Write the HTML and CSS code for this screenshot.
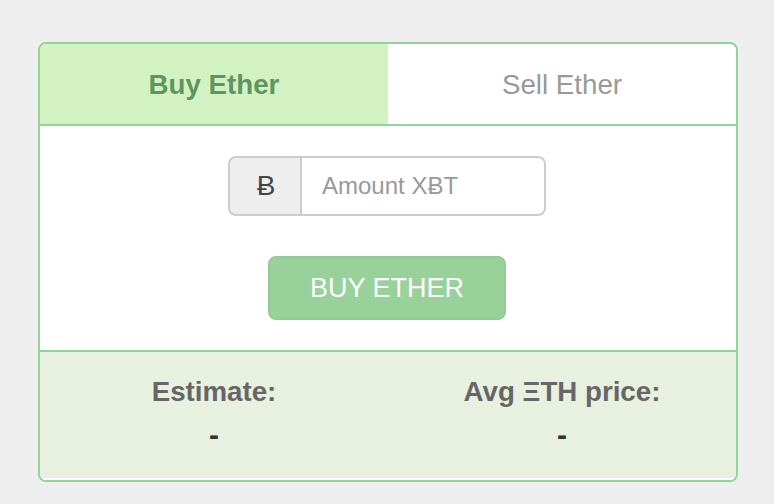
FILE: index.html
```html
<!DOCTYPE html>
<html lang="en">
<head>
    <meta charset="UTF-8">
    <meta name="viewport" content="width=device-width, initial-scale=1.0">
    <title>Buy Ether</title>
    <link rel="stylesheet" href="styles.css">
</head>
<body>
    <div class="panel">
        <div class="tabs">
            <div class="tab active">Buy Ether</div>
            <div class="tab">Sell Ether</div>
        </div>
        <div class="order">
            <div class="input-group">
                <span class="addon">Ƀ</span>
                <input class="amount" type="text" placeholder="Amount XɃT">
            </div>
            <button class="buy">BUY ETHER</button>
        </div>
        <div class="stats">
            <div class="stat">
                <div class="label">Estimate:</div>
                <div class="value">-</div>
            </div>
            <div class="stat">
                <div class="label">Avg ΞTH price:</div>
                <div class="value">-</div>
            </div>
        </div>
    </div>
</body>
</html>
```

FILE: styles.css
```css
* {
    box-sizing: border-box;
}

body {
    margin: 0;
    height: 504px;
    overflow: hidden;
    background: #eee;
    font-family: "Liberation Sans", Arial, sans-serif;
    padding: 42px 36px 0 38px;
}

.panel {
    width: 700px;
    height: 440px;
    background: #fff;
    border: 2px solid #92d396;
    border-radius: 8px;
    overflow: hidden;
}

.tabs {
    display: flex;
    height: 82px;
    border-bottom: 2px solid #92d396;
}

.tab {
    width: 50%;
    padding-top: 1px;
    display: flex;
    align-items: center;
    justify-content: center;
    font-size: 27.7px;
    color: #999;
}

.tab.active {
    background: #d3f2c1;
    color: #5f9463;
    font-weight: bold;
}

.order {
    height: 224px;
    padding: 30px 2px 0 0;
    display: flex;
    flex-direction: column;
    align-items: center;
}

.input-group {
    display: flex;
    width: 318px;
    height: 60px;
}

.addon {
    width: 74px;
    padding-left: 2px;
    display: flex;
    align-items: center;
    justify-content: center;
    background: #eee;
    border: 2px solid #ccc;
    border-radius: 8px 0 0 8px;
    color: #444;
    font-size: 28px;
}

.amount {
    flex: 1;
    min-width: 0;
    border: 2px solid #ccc;
    border-left: none;
    border-radius: 0 8px 8px 0;
    padding: 0 20px;
    font: inherit;
    font-size: 24px;
    color: #555;
}

.amount::placeholder {
    color: #999;
    opacity: 1;
}

.buy {
    width: 238px;
    height: 64px;
    margin-top: 40px;
    background: #98d19a;
    border: 2px solid #92cd94;
    border-radius: 8px;
    color: #fff;
    font: inherit;
    font-size: 27px;
}

.stats {
    display: flex;
    height: 130px;
    padding-top: 25px;
    background: #e8f0e0;
    border-top: 2px solid #92d396;
    border-bottom: 2px solid #fff;
}

.stat {
    width: 50%;
    text-align: center;
}

.label {
    font-size: 27.7px;
    font-weight: bold;
    color: #666;
    line-height: 30px;
}

.value {
    margin-top: 13px;
    font-size: 30px;
    font-weight: bold;
    color: #333;
    line-height: 30px;
}
```
